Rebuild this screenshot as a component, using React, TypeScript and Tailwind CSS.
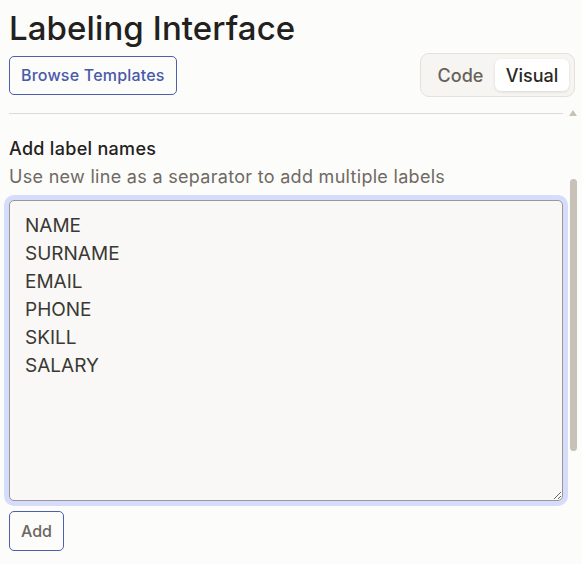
import React from "react";

export default function App() {
  const labels = "NAME\nSURNAME\nEMAIL\nPHONE\nSKILL\nSALARY";
  return (
    <div className="min-h-screen bg-[#fcfcfa] font-['Inter',sans-serif] text-[#232220] overflow-hidden">
      <div className="pl-[9px] pr-[7px]">
        <h1 className="text-[33px] leading-[40px] pt-[8px] font-medium text-[#222120] tracking-[0.1px]">
          Labeling Interface
        </h1>
        <div className="flex items-center justify-between mt-[5px]">
          <button className="h-[39px] px-[11px] rounded-[5px] border border-[#4d5fae] text-[#4a5aa8] text-[16px] font-medium tracking-[0.2px] bg-transparent">
            Browse Templates
          </button>
          <div className="flex items-center p-[5px] rounded-[9px] border border-[#e4e1da] bg-[#f6f5f2]">
            <button className="h-[32px] w-[69px] text-[18px] font-medium text-[#68635b]">
              Code
            </button>
            <button className="h-[32px] w-[74px] rounded-[6px] bg-white text-[18px] font-medium text-[#2a2824] shadow-[0_1px_3px_rgba(0,0,0,0.12)]">
              Visual
            </button>
          </div>
        </div>
      </div>
      <div className="flex mt-[16px] pl-[9px]">
        <div className="w-[554px] border-t border-[#dedbd4] pt-[21px]">
          <div className="text-[18px] leading-7 font-medium tracking-[0.3px] text-[#232220]">Add label names</div>
          <div className="text-[18px] leading-7 tracking-[0.3px] text-[#6e6a63]">
            Use new line as a separator to add multiple labels
          </div>
          <textarea
            defaultValue={labels}
            className="block mt-[9px] w-[554px] h-[301px] rounded-[5px] border border-[#9c978f] bg-[#f9f8f6] px-[15px] py-[11px] text-[19px] leading-7 text-[#3a3835] outline-none ring-[5px] ring-[#d6dcfb]"
          />
          <button className="mt-[10px] h-[40px] px-[11px] rounded-[5px] border border-[#4d5fae] text-[#6b665e] text-[16px] font-medium">
            Add
          </button>
        </div>
        <div className="ml-[6px] w-[8px] flex flex-col items-center">
          <svg width="8" height="6" viewBox="0 0 8 6" className="-mt-[3px]">
            <polygon points="4,0 8,6 0,6" fill="#c8c1b7" />
          </svg>
          <div className="mt-[63px] w-[7px] h-[272px] rounded-full bg-[#c8c1b7]" />
        </div>
      </div>
    </div>
  );
}
